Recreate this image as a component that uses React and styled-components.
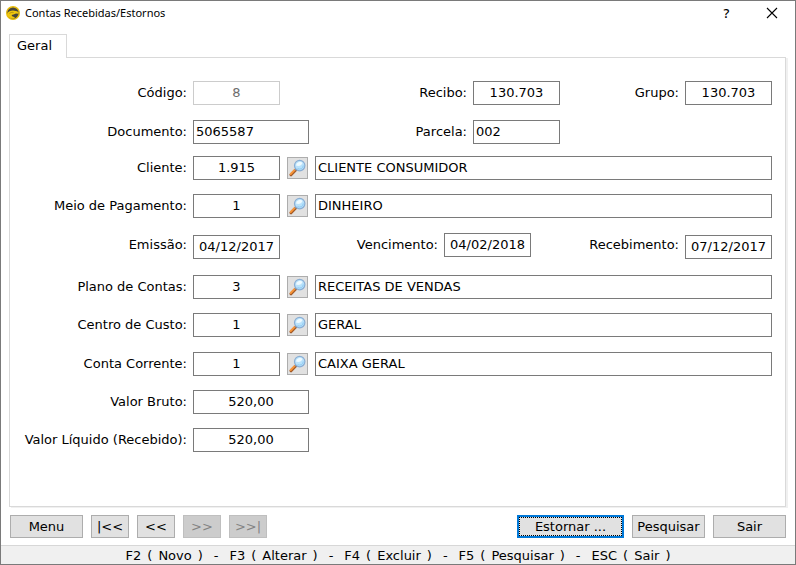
import React from "react";
import styled, { createGlobalStyle } from "styled-components";

const GlobalStyle = createGlobalStyle`
  *, *::before, *::after { box-sizing: border-box; }
  body { margin: 0; background: #fff; }
  body, button, input {
    font-family: Verdana, "DejaVu Sans", sans-serif;
    font-size: 13px;
    color: #000;
  }
`;

const Window = styled.div`
  display: flex;
  flex-direction: column;
  min-height: 100vh;
  border: 1px solid #7a7a7a;
  background: #fff;
`;

const TitleBar = styled.header`
  display: flex;
  align-items: center;
  height: 24px;
  padding: 0 17px 0 4px;
`;

const Title = styled.h1`
  flex: 1;
  margin: 0 0 0 4px;
  font: 400 11px/16px "Segoe UI", "Noto Sans", sans-serif;
`;

const CaptionButton = styled.button`
  display: flex;
  align-items: center;
  justify-content: center;
  width: 13px;
  height: 20px;
  margin-left: 32px;
  padding: 0;
  border: 0;
  background: none;
  font: 500 13px/20px "Segoe UI", "Noto Sans", sans-serif;
`;

const Tabs = styled.div`
  display: flex;
  padding: 9px 8px 0;
`;

const Tab = styled.button`
  z-index: 1;
  width: 58px;
  height: 24px;
  margin-bottom: -1px;
  padding: 0 7px 2px;
  border: 1px solid #d9d9d9;
  border-bottom: 0;
  background: #fff;
  text-align: left;
`;

const Panel = styled.main`
  flex: 1;
  display: flex;
  flex-direction: column;
  margin: 0 9px 0 8px;
  padding: 23px 13px 16px 0;
  border: 1px solid #d9d9d9;
  box-shadow: 2px 1px 0 #f0f0f0;
`;

const Row = styled.div`
  display: flex;
  align-items: flex-start;
  min-height: ${(p) => (p.$tall ? 26 : 24)}px;
  margin-top: ${(p) => p.$space || 0}px;
`;

const FieldGroup = styled.div`
  display: flex;
  align-self: stretch;
  align-items: flex-start;
  gap: 6px;
  min-width: ${(p) => (p.$lead ? 299 : 0)}px;
  margin-left: ${(p) => (p.$end ? "auto" : 0)};
`;

const Label = styled.label`
  width: ${(p) => (p.$width ? `${p.$width}px` : "auto")};
  line-height: 24px;
  text-align: right;
  white-space: nowrap;
`;

const TextBox = styled.input`
  width: ${(p) => (p.$wide ? 116 : 87)}px;
  height: 24px;
  padding: 0 2px 2px;
  border: 1px solid #7a7a7a;
  border-radius: 0;
  outline: 0;
  background: #fff;
  text-align: ${(p) => (p.$left ? "left" : "center")};
  align-self: ${(p) => (p.$low ? "flex-end" : "flex-start")};

  &:disabled {
    border-color: #ccc;
    color: #6d6d6d;
  }
`;

const Description = styled(TextBox)`
  flex: 1;
  width: auto;
  min-width: 0;
  margin-left: 7px;
`;

const SearchButton = styled.button`
  display: flex;
  align-items: center;
  justify-content: center;
  width: 21px;
  height: 22px;
  margin: 1px 0 0 7px;
  padding: 0;
  border: 1px solid #adadad;
  background: #e1e1e1;
`;

const Actions = styled.footer`
  display: flex;
  justify-content: space-between;
  padding: 8px 9px 7px;
`;

const ActionGroup = styled.div`
  display: flex;
  gap: 8px;
`;

const ActionButton = styled.button`
  width: ${(p) => (p.$size === "small" ? 38 : p.$size === "large" ? 107 : 73)}px;
  height: 23px;
  padding: 0;
  border: ${(p) => (p.$primary ? "2px solid #0078d7" : "1px solid #adadad")};
  outline: ${(p) => (p.$primary ? "1px dotted #000" : "0")};
  outline-offset: -3px;
  background: #e1e1e1;
  line-height: 19px;
  white-space: nowrap;

  &:disabled {
    border-color: #bfbfbf;
    background: #ccc;
    color: #838383;
  }
`;

const StatusBar = styled.div`
  display: flex;
  justify-content: center;
  gap: 11px;
  height: 19px;
  border-top: 1px solid #d7d7d7;
  background: #f0f0f0;
  line-height: 19px;
`;

const Shortcut = styled.span`
  display: flex;
  gap: 6px;
`;

function AppLogo() {
  return (
    <svg width="16" height="16" viewBox="0 0 16 16" aria-hidden="true">
      <circle cx="8" cy="8" r="6.3" fill="#48453a" stroke="#e8bd0c" strokeWidth="1.4" />
      <path d="M2 9C3.200 6.400 5.600 5.500 8 5.500l4 .7 1.800 1.300-.5 1.300-2.300-.3-2.500 1-2 .5 1 1.500 2.500.8-1.500 1.200C5 13.400 2.400 12 2 9z" fill="#f0c60c" />
      <path d="M4.500 8.500c1.500-1.100 2.800-1.300 4-1" stroke="#a3820f" strokeWidth=".8" fill="none" />
    </svg>
  );
}

function Magnifier() {
  return (
    <svg width="17" height="18" viewBox="0 0 17 18" aria-hidden="true">
      <path d="M2 15.800l4.400-4.500" stroke="#a35a26" strokeWidth="3" strokeLinecap="round" />
      <path d="M1.700 15l4.300-4.400" stroke="#f9963a" strokeWidth="1.800" strokeLinecap="round" />
      <path d="M6.200 11.200l1.500-1.500" stroke="#7c8794" strokeWidth="1.800" />
      <circle cx="10.700" cy="6.600" r="5.200" fill="#b9e2fb" stroke="#8aaed4" strokeWidth="1.200" />
      <path d="M7 6.600a3.800 3.800 0 0 1 6.500-2.600c-1 2.400-3.300 3.600-6.500 2.600z" fill="#eefaff" />
      <path d="M8.600 9.500a3.700 3.700 0 0 0 5.700-3" stroke="#8dcbf4" fill="none" />
    </svg>
  );
}

function Field({ id, label, value, labelWidth, lead, end, ...box }) {
  return (
    <FieldGroup $lead={lead} $end={end}>
      <Label htmlFor={id} $width={lead ? 177 : labelWidth}>{label}</Label>
      <TextBox id={id} defaultValue={value} {...box} />
    </FieldGroup>
  );
}

function LookupRow({ id, label, code, text, space }) {
  return (
    <Row $space={space}>
      <FieldGroup>
        <Label htmlFor={id} $width={177}>{label}</Label>
        <TextBox id={id} defaultValue={code} />
      </FieldGroup>
      <SearchButton type="button" aria-label={`Pesquisar ${label}`}><Magnifier /></SearchButton>
      <Description $left defaultValue={text} aria-label={`${label} descrição`} />
    </Row>
  );
}

const shortcuts = [
  ["F2", "Novo"],
  ["F3", "Alterar"],
  ["F4", "Excluir"],
  ["F5", "Pesquisar"],
  ["ESC", "Sair"],
];

export default function App() {
  return (
    <>
      <GlobalStyle />
      <Window>
        <TitleBar>
          <AppLogo />
          <Title>Contas Recebidas/Estornos</Title>
          <CaptionButton type="button" aria-label="Ajuda">?</CaptionButton>
          <CaptionButton type="button" aria-label="Fechar">
            <svg width="12" height="12" viewBox="0 0 12 12">
              <path d="M1 1l10 10M11 1L1 11" stroke="#000" strokeWidth="1.100" />
            </svg>
          </CaptionButton>
        </TitleBar>
        <Tabs role="tablist">
          <Tab type="button" role="tab" aria-selected="true">Geral</Tab>
        </Tabs>
        <Panel>
          <Row>
            <Field id="codigo" label="Código:" value="8" lead disabled />
            <Field id="recibo" label="Recibo:" value="130.703" labelWidth={158} />
            <Field id="grupo" label="Grupo:" value="130.703" end />
          </Row>
          <Row $space={15}>
            <Field id="documento" label="Documento:" value="5065587" lead $wide $left />
            <Field id="parcela" label="Parcela:" value="002" labelWidth={158} $left />
          </Row>
          <LookupRow id="cliente" label="Cliente:" code="1.915" text="CLIENTE CONSUMIDOR" space={12} />
          <LookupRow id="meio" label="Meio de Pagamento:" code="1" text="DINHEIRO" space={14} />
          <Row $space={15} $tall>
            <Field id="emissao" label="Emissão:" value="04/12/2017" lead $low />
            <Field id="vencimento" label="Vencimento:" value="04/02/2018" labelWidth={129} />
            <Field id="recebimento" label="Recebimento:" value="07/12/2017" end $low />
          </Row>
          <LookupRow id="plano" label="Plano de Contas:" code="3" text="RECEITAS DE VENDAS" space={16} />
          <LookupRow id="centro" label="Centro de Custo:" code="1" text="GERAL" space={14} />
          <LookupRow id="conta" label="Conta Corrente:" code="1" text="CAIXA GERAL" space={15} />
          <Row $space={14}>
            <Field id="bruto" label="Valor Bruto:" value="520,00" lead $wide />
          </Row>
          <Row $space={14}>
            <Field id="liquido" label="Valor Líquido (Recebido):" value="520,00" lead $wide />
          </Row>
        </Panel>
        <Actions>
          <ActionGroup>
            <ActionButton type="button">Menu</ActionButton>
            <ActionButton type="button" $size="small">|&lt;&lt;</ActionButton>
            <ActionButton type="button" $size="small">&lt;&lt;</ActionButton>
            <ActionButton type="button" $size="small" disabled>&gt;&gt;</ActionButton>
            <ActionButton type="button" $size="small" disabled>&gt;&gt;|</ActionButton>
          </ActionGroup>
          <ActionGroup>
            <ActionButton type="button" $size="large" $primary>Estornar ...</ActionButton>
            <ActionButton type="button">Pesquisar</ActionButton>
            <ActionButton type="button">Sair</ActionButton>
          </ActionGroup>
        </Actions>
        <StatusBar>
          {shortcuts.map(([key, action], i) => (
            <React.Fragment key={key}>
              {i > 0 && <span>-</span>}
              <Shortcut>
                <span>{key}</span>
                <span>(</span>
                <span>{action}</span>
                <span>)</span>
              </Shortcut>
            </React.Fragment>
          ))}
        </StatusBar>
      </Window>
    </>
  );
}
